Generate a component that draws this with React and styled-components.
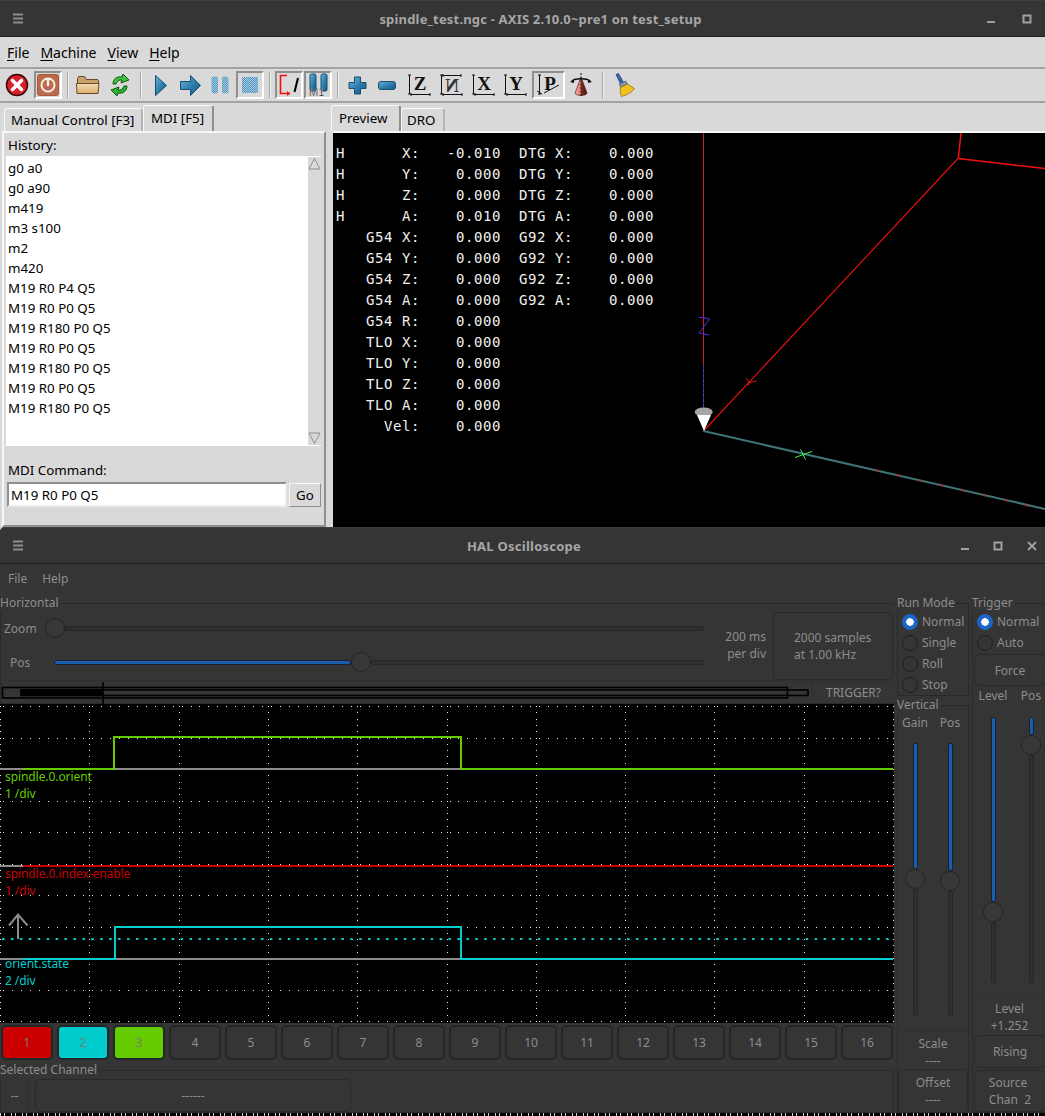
import styled, {createGlobalStyle} from "styled-components";

const GlobalStyle = createGlobalStyle`
  html, body {
    margin: 0;
    padding: 0;
    background: #d9d9d9;
    overflow: hidden;
  }
  * { box-sizing: border-box; }
`;

const Page = styled.div`
  width: 1045px;
  height: 1116px;
  display: flex;
  flex-direction: column;
  font-family: "Noto Sans", sans-serif;
`;

/* ---------- window chrome ---------- */

const TitleBar = styled.div`
  height: 37px;
  flex: none;
  display: grid;
  grid-template-columns: ${props => props.$columns};
  align-items: center;
  background: #353535;
  border-top: 1px solid #3f3f3f;
  border-bottom: 1px solid #1c1c1c;
  color: #a6a6a6;
`;

const TitleText = styled.div`
  text-align: center;
  font-size: 13px;
  font-weight: 700;
  letter-spacing: ${props => props.$spacing}px;
  padding-left: ${props => props.$pad}px;
`;

const ChromeButton = styled.span`
  display: flex;
  justify-content: center;
  align-items: center;
  svg { display: block; }
`;

function Hamburger() {
  return (
    <ChromeButton>
      <svg width="12" height="11" viewBox="0 0 12 11">
        <path d="M1 1.5h10M1 5.5h10M1 9.5h10" stroke="#8c8c8c" strokeWidth="2" />
      </svg>
    </ChromeButton>
  );
}

function MinIcon() {
  return (
    <ChromeButton>
      <svg width="10" height="10" viewBox="0 0 10 10">
        <path d="M1 8h8" stroke="#a0a0a0" strokeWidth="2" />
      </svg>
    </ChromeButton>
  );
}

function MaxIcon() {
  return (
    <ChromeButton>
      <svg width="10" height="10" viewBox="0 0 10 10">
        <rect x="1.5" y="1.5" width="7" height="7" fill="none" stroke="#a0a0a0" strokeWidth="2" />
      </svg>
    </ChromeButton>
  );
}

function CloseIcon() {
  return (
    <ChromeButton>
      <svg width="10" height="10" viewBox="0 0 10 10">
        <path d="M1 1l8 8M9 1l-8 8" stroke="#a0a0a0" strokeWidth="1.8" />
      </svg>
    </ChromeButton>
  );
}

/* ---------- AXIS window ---------- */

const AxisWindow = styled.div`
  height: 527px;
  flex: none;
  display: flex;
  flex-direction: column;
  background: #d9d9d9;
  color: #000;
  font-size: 13.33px;
`;

const MenuBar = styled.div`
  height: 32px;
  flex: none;
  display: flex;
  align-items: center;
  gap: 11px;
  padding: 0 0 0 7px;
  font-size: 14px;
  border-bottom: 2px solid #a3a3a3;
  u { text-underline-offset: 2px; }
`;

const ToolBar = styled.div`
  height: 34px;
  flex: none;
  display: flex;
  align-items: center;
  padding-left: 3px;
  border-bottom: 2px solid #a3a3a3;
`;

const Tool = styled.div`
  width: ${props => props.$w || 28}px;
  height: 28px;
  margin-left: ${props => props.$ml || 0}px;
  flex: none;
  display: flex;
  align-items: center;
  justify-content: center;
  border: 2px solid;
  border-color: ${props => props.$on ? "#8f8f8f #fff #fff #8f8f8f" : "transparent"};
  svg { display: block; flex: none; }
`;

const ToolSep = styled.div`
  width: 2px;
  height: 26px;
  margin-left: ${props => props.$ml || 5}px;
  flex: none;
  background: linear-gradient(90deg, #a8a8a8 50%, #f2f2f2 50%);
`;

const Workspace = styled.div`
  flex: 1;
  min-height: 0;
  display: flex;
`;

const LeftPane = styled.div`
  width: 331px;
  flex: none;
  display: flex;
  flex-direction: column;
  padding: 1px 0 0 2px;
`;

const TabStrip = styled.div`
  height: 27px;
  flex: none;
  display: flex;
  align-items: flex-end;
  padding-left: ${props => props.$pad || 0}px;
`;

const Tab = styled.div`
  width: ${props => props.$w}px;
  height: ${props => props.$active ? 26 : 23}px;
  padding: ${props => props.$active ? 3 : 2}px 0 0 ${props => props.$text}px;
  line-height: 18px;
  font-size: 13.33px;
  white-space: nowrap;
  border-top: 1px solid #f7f7f7;
  border-left: 1px solid #f7f7f7;
  border-right: 2px solid ${props => props.$active ? "#8f8f8f" : "#b5b5b5"};
  border-radius: 3px 3px 0 0;
`;

const TabBody = styled.div`
  flex: 1;
  width: 324px;
  display: flex;
  flex-direction: column;
  border-top: 2px solid #f7f7f7;
  border-left: 2px solid #f7f7f7;
  border-right: 2px solid #8f8f8f;
  border-bottom: 2px solid #8f8f8f;
  padding: 3px 3px 0 2px;
`;

const FieldLabel = styled.div`
  height: 18px;
  line-height: 18px;
  padding-left: 2px;
  font-size: 13.33px;
  flex: none;
`;

const HistoryBox = styled.div`
  height: 290px;
  margin-top: 2px;
  flex: none;
  display: flex;
  background: #fff;
`;

const HistoryList = styled.div`
  flex: 1;
  padding: 2px 0 0 2px;
`;

const HistoryItem = styled.div`
  height: 20px;
  line-height: 20px;
  font-size: 13.33px;
`;

const ScrollBar = styled.div`
  width: 13px;
  flex: none;
  margin: 1px 0;
  display: flex;
  flex-direction: column;
  justify-content: space-between;
  background: #d9d9d9;
  svg { display: block; }
`;

const CommandLabel = styled(FieldLabel)`
  margin-top: 15px;
`;

const CommandRow = styled.div`
  display: flex;
  gap: 2px;
  margin-top: 3px;
  padding-left: 1px;
`;

const CommandEntry = styled.div`
  width: 280px;
  height: 25px;
  padding-left: 2px;
  line-height: 22px;
  font-size: 13.33px;
  background: #fff;
  border: 2px solid;
  border-color: #8f8f8f #ececec #ececec #8f8f8f;
`;

const GoButton = styled.div`
  width: 32px;
  height: 24px;
  margin-top: 1px;
  text-align: center;
  line-height: 22px;
  font-size: 13.33px;
  border: 1px solid;
  border-color: #f7f7f7 #8f8f8f #8f8f8f #f7f7f7;
`;

const RightPane = styled.div`
  flex: 1;
  min-width: 0;
  display: flex;
  flex-direction: column;
  padding-top: 1px;
`;

const PreviewCanvas = styled.div`
  position: relative;
  flex: 1;
  margin-left: 2px;
  padding: 10px 0 0 3px;
  background: #000;
  border-top: 2px solid #f7f7f7;
  svg {
    position: absolute;
    left: 0;
    top: 0;
  }
`;

const DroRow = styled.div`
  position: relative;
  height: 21px;
  display: flex;
  line-height: 21px;
  font-family: "DejaVu Sans Mono", monospace;
  font-size: 14px;
  letter-spacing: 0.57px;
  color: #f0f0f0;
  white-space: pre;
`;

const HomeMark = styled.span`
  width: 30px;
  flex: none;
`;

/* ---------- HAL scope window ---------- */

const ScopeWindow = styled.div`
  flex: 1;
  min-height: 0;
  display: flex;
  flex-direction: column;
  background: #353535;
  color: #8d8d8d;
  font-size: 12px;
  border-radius: 5px 0 0 0;
  overflow: hidden;
`;

const ScopeMenu = styled.div`
  height: 31px;
  flex: none;
  display: flex;
  align-items: center;
  gap: 15px;
  padding: 0 0 2px 8px;
  font-size: 12px;
`;

const ScopeBody = styled.div`
  flex: 1;
  min-height: 0;
  display: flex;
`;

const ScopeMain = styled.div`
  width: 894px;
  flex: none;
  display: flex;
  flex-direction: column;
`;

const Group = styled.fieldset`
  margin: 0;
  padding: 0;
  min-width: 0;
  border: 1px solid #2a2a2a;
  border-right-width: ${props => props.$open ? 0 : 1}px;
  display: flex;
  flex-direction: column;
  flex: none;
`;

const FillGroup = styled(Group)`
  flex: 1;
`;

const Legend = styled.legend`
  padding: 0;
  height: 16px;
  line-height: 15px;
  font-size: 12px;
  margin-left: -1px;
  padding-right: 1px;
`;

const HorizontalGroup = styled(Group)`
  height: 109px;
  border-right: 0;
`;

const HorizontalTop = styled.div`
  height: 69px;
  flex: none;
  display: flex;
`;

const SliderStack = styled.div`
  width: 703px;
  flex: none;
  padding-top: 7px;
  display: flex;
  flex-direction: column;
  gap: 14px;
`;

const SliderRow = styled.div`
  height: 20px;
  display: flex;
  align-items: center;
`;

const SliderLabel = styled.span`
  width: ${props => props.$w}px;
  flex: none;
  padding-left: ${props => props.$pad}px;
`;

const Groove = styled.div`
  flex: ${props => props.$rest ? 1 : "none"};
  ${props => props.$vertical ? "width: 5px;" : "height: 5px;"}
  ${props => props.$size !== undefined
    ? (props.$vertical ? `height: ${props.$size}px;` : `width: ${props.$size}px;`)
    : ""}
  background: ${props => props.$rest ? "#2f2f2f" : "#1a5cb0"};
  border: 1px solid ${props => props.$rest ? "#262626" : "#18222e"};
  border-radius: 2px;
`;

const Knob = styled.div`
  width: 20px;
  height: 20px;
  flex: none;
  border-radius: 50%;
  background: #383838;
  border: 1px solid #242424;
`;

const TimeLabel = styled.div`
  width: 62px;
  flex: none;
  padding-top: 17px;
  text-align: right;
  line-height: 17px;
`;

const SampleBox = styled.div`
  width: 120px;
  height: 68px;
  margin: 1px 0 0 7px;
  padding-left: 20px;
  flex: none;
  display: flex;
  flex-direction: column;
  align-items: flex-start;
  justify-content: center;
  line-height: 17px;
  border: 1px solid #292929;
  border-radius: 5px;
`;

const RecordRow = styled.div`
  height: 23px;
  flex: none;
  display: flex;
  border-top: 1px solid #303030;
  svg { display: block; flex: none; }
`;

const TriggerState = styled.div`
  flex: 1;
  text-align: center;
  line-height: 23px;
  border-left: 1px solid #303030;
`;

const ScreenFrame = styled.div`
  height: 319px;
  flex: none;
  background: #000;
  svg { display: block; }
`;

const ChannelRow = styled.div`
  height: 40px;
  flex: none;
  display: grid;
  grid-template-columns: repeat(16, 1fr);
  gap: 4px;
  padding: 2px 1px 3px 1px;
`;

const ChannelButton = styled.div`
  height: 35px;
  display: flex;
  align-items: center;
  justify-content: center;
  background: ${props => props.$color || "#353535"};
  border: 2px solid ${props => props.$color ? "#20282a" : "#262626"};
  border-radius: 5px;
  color: ${props => props.$color ? "#7a7a7a" : "#8d8d8d"};
`;

const SelectedGroup = styled(Group)`
  height: 51px;
  margin-top: -1px;
`;

const SelectedRow = styled.div`
  height: 34px;
  flex: none;
  display: flex;
  align-items: stretch;
`;

const SelectedIndex = styled.div`
  width: 28px;
  flex: none;
  display: flex;
  align-items: center;
  justify-content: center;
  border-right: 1px solid #303030;
`;

const SelectedName = styled.div`
  width: 316px;
  margin: 1px 0 0 6px;
  display: flex;
  align-items: center;
  justify-content: center;
  border: 1px solid #292929;
  border-radius: 5px;
`;

const ScopeFoot = styled.div`
  height: 3px;
  flex: none;
  background: repeating-linear-gradient(90deg, #cfcfcf 0 1px, #000 1px 4px, #cfcfcf 4px 5px, #000 5px 11px);
`;

const SideColumn = styled.div`
  width: ${props => props.$w}px;
  margin-left: ${props => props.$ml}px;
  flex: none;
  display: flex;
  flex-direction: column;
  gap: 1px;
`;

const RadioRow = styled.div`
  height: 21px;
  flex: none;
  display: flex;
  align-items: center;
  gap: 4px;
  padding-left: 4px;
`;

const RadioDot = styled.span`
  width: 16px;
  height: 16px;
  flex: none;
  border-radius: 50%;
  background: ${props => props.$on ? "radial-gradient(circle, #fff 0 3.5px, #1c66c8 4px)" : "#353535"};
  border: 1px solid ${props => props.$on ? "#1c66c8" : "#1f1f1f"};
`;

const SliderPair = styled.div`
  display: flex;
  padding-left: ${props => props.$pad}px;
  gap: ${props => props.$gap}px;
  margin-top: ${props => props.$top || 0}px;
`;

const SliderColumn = styled.div`
  width: 20px;
  display: flex;
  flex-direction: column;
  align-items: center;
`;

const ColumnLabel = styled.div`
  height: 16px;
  line-height: 16px;
  white-space: nowrap;
`;

const VerticalSlider = styled.div`
  height: ${props => props.$h}px;
  margin-top: ${props => props.$gap}px;
  display: flex;
  flex-direction: column;
  align-items: center;
`;

const Readout = styled.div`
  height: ${props => props.$h}px;
  margin-top: 15px;
  padding-top: ${props => props.$shift || 0}px;
  flex: none;
  display: flex;
  flex-direction: column;
  align-items: center;
  justify-content: center;
  line-height: 17px;
  border-top: 1px solid #303030;
`;

const SideButton = styled.div`
  height: ${props => props.$h}px;
  margin: ${props => props.$m || "0"};
  flex: none;
  display: flex;
  flex-direction: column;
  align-items: center;
  justify-content: center;
  line-height: 17px;
  border: 1px solid #292929;
  border-radius: 5px;
  white-space: pre;
`;

/* ---------- toolbar drawings ---------- */

const SharedDefs = styled.svg`
  position: absolute;
`;

function Shared() {
  return (
    <SharedDefs width="0" height="0">
      <defs>
        <linearGradient id="blueFill" x1="0" y1="0" x2="1" y2="1">
          <stop offset="0" stopColor="#6db3d8" />
          <stop offset="0.55" stopColor="#2b7cab" />
          <stop offset="1" stopColor="#16577f" />
        </linearGradient>
        <pattern id="dither" width="2" height="2" patternUnits="userSpaceOnUse">
          <rect width="2" height="2" fill="#a8cde0" />
          <rect width="1" height="1" fill="#4f94bf" />
          <rect x="1" y="1" width="1" height="1" fill="#4f94bf" />
        </pattern>
        <linearGradient id="coneFill" x1="0" y1="0" x2="1" y2="0">
          <stop offset="0" stopColor="#f6b0a8" />
          <stop offset="0.5" stopColor="#d9726a" />
          <stop offset="0.55" stopColor="#7d2a22" />
          <stop offset="1" stopColor="#4a120e" />
        </linearGradient>
        <linearGradient id="folderFill" x1="0" y1="0" x2="0" y2="1">
          <stop offset="0" stopColor="#f3dcb4" />
          <stop offset="1" stopColor="#d9ae72" />
        </linearGradient>
      </defs>
    </SharedDefs>
  );
}

function StopIcon() {
  return (
    <svg width="24" height="24" viewBox="0 0 24 24">
      <circle cx="12" cy="12" r="10.5" fill="#d8202a" stroke="#3a0505" strokeWidth="1.5" />
      <path d="M7.5 7.5l9 9M16.5 7.5l-9 9" stroke="#fff" strokeWidth="3.6" strokeLinecap="round" />
    </svg>
  );
}

function PowerIcon() {
  return (
    <svg width="22" height="22" viewBox="0 0 22 22">
      <rect x="0.5" y="0.5" width="21" height="21" rx="2" fill="#bd6a4c" stroke="#a65a40" />
      <circle cx="11" cy="11" r="6.5" fill="none" stroke="#f3efe8" strokeWidth="2" />
      <path d="M11 5v7" stroke="#f3efe8" strokeWidth="2.4" />
    </svg>
  );
}

function FolderIcon() {
  return (
    <svg width="24" height="20" viewBox="0 0 24 20">
      <path d="M1.5 3.5l1-2h6l2 3h11l1 1v3h-21z" fill="#c9a36e" stroke="#6b4a22" />
      <path d="M1 18.5l-.5-10h22.5l-1 10z" fill="url(#folderFill)" stroke="#6b4a22" />
    </svg>
  );
}

function ReloadIcon() {
  return (
    <svg width="22" height="24" viewBox="0 0 22 24">
      <path d="M4 11c0-5 4-8 9-7l1-3 6 6-8 3 1-3c-3-.5-5 1-6 4z" fill="#3fc23f" stroke="#0b5a0b" />
      <path d="M18 13c0 5-4 8-9 7l-1 3-6-6 8-3-1 3c3 .5 5-1 6-4z" fill="#2fae2f" stroke="#0b5a0b" />
    </svg>
  );
}

function RunIcon() {
  return (
    <svg width="14" height="23" viewBox="0 0 14 23">
      <path d="M1.5 1.5l11 10-11 10z" fill="url(#blueFill)" stroke="#174f70" strokeLinejoin="round" />
    </svg>
  );
}

function StepIcon() {
  return (
    <svg width="23" height="23" viewBox="0 0 23 23">
      <path d="M1.5 7.5h10v-6l10 10-10 10v-6h-10z" fill="url(#blueFill)" stroke="#174f70" strokeLinejoin="round" />
    </svg>
  );
}

function PauseIcon() {
  return (
    <svg width="18" height="18" viewBox="0 0 18 18">
      <rect x="0.5" y="0.5" width="6.5" height="17" rx="2" fill="url(#dither)" />
      <rect x="11" y="0.5" width="6.5" height="17" rx="2" fill="url(#dither)" />
    </svg>
  );
}

function StopSquareIcon() {
  return (
    <svg width="16" height="16" viewBox="0 0 16 16">
      <rect width="16" height="16" rx="1" fill="url(#dither)" />
    </svg>
  );
}

function BlockDeleteIcon() {
  return (
    <svg width="23" height="23" viewBox="0 0 23 23">
      <path d="M9 1.5h-6.5v18h8" fill="none" stroke="#ee1111" strokeWidth="1.6" />
      <path d="M9 17l3.5 2.5-3.5 2.5z" fill="#ee1111" />
      <path d="M20 4l-3.5 14" stroke="#000" strokeWidth="2" />
    </svg>
  );
}

function OptionalStopIcon() {
  return (
    <svg width="24" height="24" viewBox="0 0 24 24">
      <rect x="4" y="1" width="6" height="17" rx="1.5" fill="url(#blueFill)" stroke="#174f70" />
      <rect x="15" y="1" width="6" height="17" rx="1.5" fill="url(#blueFill)" stroke="#174f70" />
      <text x="3" y="23" fontFamily="'Liberation Sans', sans-serif" fontSize="11" fill="#000" stroke="#fff" strokeWidth="0.25">M1</text>
    </svg>
  );
}

function PlusIcon() {
  return (
    <svg width="19" height="19" viewBox="0 0 19 19">
      <path d="M6.5 1h6v5.5h5.5v6h-5.5v5.5h-6v-5.5h-5.5v-6h5.5z" fill="url(#blueFill)" stroke="#174f70" strokeLinejoin="round" />
    </svg>
  );
}

function MinusIcon() {
  return (
    <svg width="18" height="9" viewBox="0 0 18 9">
      <rect x="0.5" y="0.5" width="17" height="8" rx="2.5" fill="url(#blueFill)" stroke="#174f70" />
    </svg>
  );
}

function ViewIcon({letter, rotate, perspective}) {
  return (
    <svg width="26" height="25" viewBox="0 0 26 25">
      <path d="M3.5 2v19M2 2h3M2 21h3" stroke="#111" fill="none" />
      {perspective
        ? <path d="M1 18l5 3M8 20l15-8" stroke="#111" fill="none" />
        : <path d="M5 21.5h19M5 20v3M24 20v3" stroke="#111" fill="none" />}
      {rotate
        ? <path d="M5 2.5h18M5 1v3M23 1v3" stroke="#111" fill="none" />
        : null}
      <text
        x="14"
        y={rotate ? 19 : 17}
        textAnchor="middle"
        fontFamily="'Liberation Serif', serif"
        fontWeight="700"
        fontSize="19"
        fill={rotate ? "#333" : "#111"}
        transform={rotate ? "translate(28 0) scale(-1 1)" : undefined}
      >
        {letter}
      </text>
    </svg>
  );
}

function RotateIcon() {
  return (
    <svg width="22" height="24" viewBox="0 0 22 24">
      <path d="M11 4l6 16a6 2.5 0 0 1-12 0z" fill="url(#coneFill)" stroke="#3a1410" strokeWidth="0.6" />
      <path d="M11 0v24" stroke="#111" strokeDasharray="2 1.5" />
      <path d="M2 8c3-3 15-3 18 0" fill="none" stroke="#111" strokeWidth="1.4" />
      <path d="M0 9l4-3 0 4zM22 9l-4-3 0 4z" fill="#111" />
    </svg>
  );
}

function BrushIcon() {
  return (
    <svg width="22" height="24" viewBox="0 0 22 24">
      <path d="M3 1.5l2.5-1 5 9-3 1.5z" fill="#3a66b8" stroke="#1e3468" strokeWidth="0.7" />
      <path d="M6.5 11l6-3 2 3-7 3.5z" fill="#8a96a8" stroke="#444" strokeWidth="0.6" />
      <path d="M7.5 14.5l7-3.5 7 4.5c-3 4-7 6.5-13 8-1.5-2.5-1.5-6-1-9z" fill="#f0c020" stroke="#8a6a08" strokeWidth="0.7" />
    </svg>
  );
}

/* ---------- canvases ---------- */

function PreviewLines() {
  return (
    <svg width="712" height="395" viewBox="333 132 712 395">
      <path d="M703.5 132V363" stroke="#d81c1c" />
      <path d="M703.5 363V406" stroke="#3232d8" strokeDasharray="3 2" />
      <path d="M699 316.5h4l6.5 1.5-10.5 14 10 2" fill="none" stroke="#3838e8" />
      <path d="M703.5 430L958 157.5" stroke="#f01010" strokeWidth="1.1" fill="none" />
      <path d="M958.3 157.5L961 132M958.3 157.5L1045 167.5" stroke="#f51010" strokeWidth="1.5" fill="none" />
      <path d="M746 377l3.5 4.5 7-1.5M749.5 381.5l-1.5 3" stroke="#f01818" fill="none" />
      <path d="M703.5 430L1045 508" stroke="#3f7476" strokeWidth="2" fill="none" />
      <path d="M875 469l4 1M897 474l4 1M918 479l4 1M940 484l4 1M961 489l4 1M983 494l4 1M1004 499l4 1M1025 504l4 1" stroke="#a03838" strokeWidth="1.6" />
      <path d="M795 456.5l17-6M800.5 448.5l5 10" stroke="#44ee55" fill="none" />
      <path d="M703.5 363V410" stroke="#5050b0" strokeWidth="0.6" />
      <ellipse cx="703.7" cy="411" rx="9" ry="4.5" fill="#a6a6a6" />
      <path d="M697 414h14l-7 16z" fill="#fff" />
    </svg>
  );
}

function RecordBar() {
  return (
    <svg width="811" height="23" viewBox="0 680 811 23">
      <rect x="1.5" y="686.5" width="785" height="10.5" fill="none" stroke="#000" strokeWidth="1.6" />
      <rect x="20" y="689" width="787" height="5.5" fill="none" stroke="#000" strokeWidth="1.6" />
      <rect x="20" y="688" width="82" height="6" fill="#000" />
      <path d="M102 681V703" stroke="#000" strokeWidth="1.6" />
    </svg>
  );
}

function dotGrid() {
  const dots = [];
  for (let r = 0; r <= 10; r++) {
    const y = 706 + r * 31.5;
    for (let i = 0; i <= 100; i++) {
      dots.push(<rect key={`h${r}-${i}`} x={Math.round(i * 8.93) + 3} y={Math.round(y)} width="1" height="1" fill="#e8e8e8" />);
    }
  }
  for (let c = 0; c <= 10; c++) {
    const x = Math.round(c * 89.3);
    for (let j = 0; j <= 50; j++) {
      dots.push(<rect key={`v${c}-${j}`} x={x} y={Math.round(706 + j * 6.3)} width="1" height="1" fill="#e8e8e8" />);
    }
  }
  return dots;
}

const TraceLabel = styled.text`
  font-family: "Noto Sans", sans-serif;
  font-size: 12px;
  letter-spacing: -0.08px;
  fill: ${props => props.$color};
`;

function ScopeScreen() {
  return (
    <svg width="894" height="319" viewBox="0 704 894 319">
      {dotGrid()}
      <path d="M0 769H23M114 769H460" stroke="#8c8c8c" strokeWidth="2" />
      <path d="M23 769H114V737H461V769H893" fill="none" stroke="#66cc00" strokeWidth="2" />
      <path d="M0 866H23" stroke="#8c8c8c" strokeWidth="2" />
      <path d="M23 866H893" stroke="#cc0000" strokeWidth="2" />
      <path d="M0 959H23M114 959H460" stroke="#8c8c8c" strokeWidth="2" />
      <path d="M23 959H115V927H461V959H893" fill="none" stroke="#00cccc" strokeWidth="2" />
      <path d="M2 939H893" stroke="#00cccc" strokeWidth="2" strokeDasharray="2.5 6.43" />
      <path d="M18 939V915M9 925.5L18 914.5L27.5 925.5" fill="none" stroke="#8c8c8c" strokeWidth="2" />
      <TraceLabel $color="#66cc00" x="5" y="781">spindle.0.orient</TraceLabel>
      <TraceLabel $color="#66cc00" x="5" y="798">1 /div</TraceLabel>
      <TraceLabel $color="#cc0000" x="5" y="878">spindle.0.index-enable</TraceLabel>
      <TraceLabel $color="#cc0000" x="5" y="895">1 /div</TraceLabel>
      <TraceLabel $color="#00cccc" x="5" y="968">orient.state</TraceLabel>
      <TraceLabel $color="#00cccc" x="5" y="985">2 /div</TraceLabel>
    </svg>
  );
}

/* ---------- data ---------- */

const history = [
  "g0 a0", "g0 a90", "m419", "m3 s100", "m2", "m420", "M19 R0 P4 Q5", "M19 R0 P0 Q5",
  "M19 R180 P0 Q5", "M19 R0 P0 Q5", "M19 R180 P0 Q5", "M19 R0 P0 Q5", "M19 R180 P0 Q5",
];

const dro = [
  ["H", "    X:   -0.010  DTG X:    0.000"],
  ["H", "    Y:    0.000  DTG Y:    0.000"],
  ["H", "    Z:    0.000  DTG Z:    0.000"],
  ["H", "    A:    0.010  DTG A:    0.000"],
  ["", "G54 X:    0.000  G92 X:    0.000"],
  ["", "G54 Y:    0.000  G92 Y:    0.000"],
  ["", "G54 Z:    0.000  G92 Z:    0.000"],
  ["", "G54 A:    0.000  G92 A:    0.000"],
  ["", "G54 R:    0.000"],
  ["", "TLO X:    0.000"],
  ["", "TLO Y:    0.000"],
  ["", "TLO Z:    0.000"],
  ["", "TLO A:    0.000"],
  ["", "  Vel:    0.000"],
];

const channelColors = {1: "#cc0000", 2: "#00cccc", 3: "#66cc00"};
const channels = Array.from({length: 16}, (_, i) => i + 1);

function Radio({label, on}) {
  return (
    <RadioRow>
      <RadioDot $on={on} />
      {label}
    </RadioRow>
  );
}

function LabeledSlider({label, length, fill, gap}) {
  return (
    <SliderColumn>
      <ColumnLabel>{label}</ColumnLabel>
      <VerticalSlider $h={length} $gap={gap}>
        <Groove $vertical $size={fill} />
        <Knob />
        <Groove $vertical $rest />
      </VerticalSlider>
    </SliderColumn>
  );
}

export default function App() {
  return (
    <Page>
      <GlobalStyle />
      <Shared />
      <AxisWindow>
        <TitleBar $columns="36px 1fr 36px 36px">
          <Hamburger />
          <TitleText $spacing={0.18} $pad={72}>spindle_test.ngc - AXIS 2.10.0~pre1 on test_setup</TitleText>
          <MinIcon />
          <MaxIcon />
        </TitleBar>
        <MenuBar>
          <span><u>F</u>ile</span>
          <span><u>M</u>achine</span>
          <span><u>V</u>iew</span>
          <span><u>H</u>elp</span>
        </MenuBar>
        <ToolBar>
          <Tool><StopIcon /></Tool>
          <Tool $ml={3} $on><PowerIcon /></Tool>
          <ToolSep />
          <Tool $ml={5}><FolderIcon /></Tool>
          <Tool $ml={4}><ReloadIcon /></Tool>
          <ToolSep $ml={6} />
          <Tool $ml={5}><RunIcon /></Tool>
          <Tool $ml={1}><StepIcon /></Tool>
          <Tool $ml={2}><PauseIcon /></Tool>
          <Tool $ml={2} $on><StopSquareIcon /></Tool>
          <ToolSep $ml={5} />
          <Tool $ml={4} $on><BlockDeleteIcon /></Tool>
          <Tool $ml={1} $on><OptionalStopIcon /></Tool>
          <ToolSep $ml={5} />
          <Tool $ml={4}><PlusIcon /></Tool>
          <Tool $ml={2}><MinusIcon /></Tool>
          <Tool $ml={4}><ViewIcon letter="Z" /></Tool>
          <Tool $ml={4}><ViewIcon letter="N" rotate /></Tool>
          <Tool $ml={4}><ViewIcon letter="X" /></Tool>
          <Tool $ml={4}><ViewIcon letter="Y" /></Tool>
          <Tool $ml={3} $w={33} $on><ViewIcon letter="P" perspective /></Tool>
          <Tool $ml={2}><RotateIcon /></Tool>
          <ToolSep $ml={7} />
          <Tool $ml={6}><BrushIcon /></Tool>
        </ToolBar>
        <Workspace>
          <LeftPane>
            <TabStrip $pad={2}>
              <Tab $w={139} $text={6}>Manual Control [F3]</Tab>
              <Tab $w={71} $active $text={7}>MDI [F5]</Tab>
            </TabStrip>
            <TabBody>
              <FieldLabel>History:</FieldLabel>
              <HistoryBox>
                <HistoryList>
                  {history.map((line, i) => <HistoryItem key={i}>{line}</HistoryItem>)}
                </HistoryList>
                <ScrollBar>
                  <svg width="13" height="13" viewBox="0 0 13 13">
                    <path d="M6.5 1.5L12 12H1z" fill="#d9d9d9" stroke="#8f8f8f" />
                  </svg>
                  <svg width="13" height="13" viewBox="0 0 13 13">
                    <path d="M6.5 11.5L12 1H1z" fill="#d9d9d9" stroke="#8f8f8f" />
                  </svg>
                </ScrollBar>
              </HistoryBox>
              <CommandLabel>MDI Command:</CommandLabel>
              <CommandRow>
                <CommandEntry>M19 R0 P0 Q5</CommandEntry>
                <GoButton>Go</GoButton>
              </CommandRow>
            </TabBody>
          </LeftPane>
          <RightPane>
            <TabStrip>
              <Tab $w={70} $active $text={7}>Preview</Tab>
              <Tab $w={44} $text={5}>DRO</Tab>
            </TabStrip>
            <PreviewCanvas>
              <PreviewLines />
              {dro.map(([mark, text], i) => (
                <DroRow key={i}>
                  <HomeMark>{mark}</HomeMark>
                  {text}
                </DroRow>
              ))}
            </PreviewCanvas>
          </RightPane>
        </Workspace>
      </AxisWindow>

      <ScopeWindow>
        <TitleBar $columns="36px 1fr 24px 42px 26px">
          <Hamburger />
          <TitleText $spacing={0.25} $pad={59}>HAL Oscilloscope</TitleText>
          <MinIcon />
          <MaxIcon />
          <CloseIcon />
        </TitleBar>
        <ScopeMenu>
          <span>File</span>
          <span>Help</span>
        </ScopeMenu>
        <ScopeBody>
          <ScopeMain>
            <HorizontalGroup>
              <Legend>Horizontal</Legend>
              <HorizontalTop>
                <SliderStack>
                  <SliderRow>
                    <SliderLabel $w={44} $pad={3}>Zoom</SliderLabel>
                    <Knob />
                    <Groove $rest />
                  </SliderRow>
                  <SliderRow>
                    <SliderLabel $w={53} $pad={9}>Pos</SliderLabel>
                    <Groove $size={297} />
                    <Knob />
                    <Groove $rest />
                  </SliderRow>
                </SliderStack>
                <TimeLabel>200 ms<br />per div</TimeLabel>
                <SampleBox>
                  <span>2000 samples</span>
                  <span>at 1.00 kHz</span>
                </SampleBox>
              </HorizontalTop>
              <RecordRow>
                <RecordBar />
                <TriggerState>TRIGGER?</TriggerState>
              </RecordRow>
            </HorizontalGroup>
            <ScreenFrame><ScopeScreen /></ScreenFrame>
            <ChannelRow>
              {channels.map(n => (
                <ChannelButton key={n} $color={channelColors[n]}>{n}</ChannelButton>
              ))}
            </ChannelRow>
            <SelectedGroup>
              <Legend>Selected Channel</Legend>
              <SelectedRow>
                <SelectedIndex>--</SelectedIndex>
                <SelectedName>------</SelectedName>
              </SelectedRow>
            </SelectedGroup>
          </ScopeMain>

          <SideColumn $w={72} $ml={3}>
            <Group>
              <Legend>Run Mode</Legend>
              <Radio label="Normal" on />
              <Radio label="Single" />
              <Radio label="Roll" />
              <Radio label="Stop" />
            </Group>
            <FillGroup>
              <Legend>Vertical</Legend>
              <SliderPair $pad={7} $gap={15} $top={2}>
                <LabeledSlider label="Gain" length={273} fill={126} gap={12} />
                <LabeledSlider label="Pos" length={273} fill={128} gap={12} />
              </SliderPair>
              <Readout $h={38} $shift={2}>
                <span>Scale</span>
                <span>----</span>
              </Readout>
              <SideButton $h={44}>
                <span>Offset</span>
                <span>----</span>
              </SideButton>
            </FillGroup>
          </SideColumn>

          <SideColumn $w={74} $ml={3}>
            <FillGroup $open>
              <Legend>Trigger</Legend>
              <Radio label="Normal" on />
              <Radio label="Auto" />
              <SideButton $h={32} $m="1px 0 2px 1px">Force</SideButton>
              <SliderPair $pad={10} $gap={18}>
                <LabeledSlider label="Level" length={266} fill={185} gap={13} />
                <LabeledSlider label="Pos" length={266} fill={18} gap={13} />
              </SliderPair>
              <Readout $h={37}>
                <span>Level</span>
                <span>+1.252</span>
              </Readout>
              <SideButton $h={33} $m="0 0 2px 1px">Rising</SideButton>
              <SideButton $h={42} $m="0 0 0 1px">{"Source\nChan  2"}</SideButton>
            </FillGroup>
          </SideColumn>
        </ScopeBody>
        <ScopeFoot />
      </ScopeWindow>
    </Page>
  );
}
